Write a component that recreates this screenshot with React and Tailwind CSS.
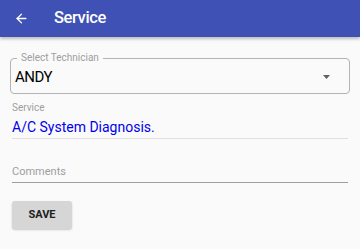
import { ArrowLeft } from "lucide-react";

function App() {
     return (
          <div className="w-[360px] h-[249px] bg-[#fafafa] overflow-hidden font-['Roboto',sans-serif]">

               {/* Header */}
               <header className="h-[37px] bg-[#3f51b5] flex items-center shadow-[0_2px_3px_rgba(0,0,0,0.25)]">
                    <ArrowLeft size={15} strokeWidth={2.2} className="ml-[14px] text-white" />
                    <h1 className="ml-[25px] text-[16.5px] tracking-[-0.4px] font-medium text-white">Service</h1>
               </header>

               <div className="px-[10px] pt-[21px]">

                    {/* Select */}
                    <div className="relative h-[36px] border border-[#b4b4b4] rounded-[4px] pl-[4px] pr-[19px] pt-[2px] flex items-center justify-between">
                         <span className="absolute left-[6px] -top-[7px] px-[4px] bg-[#fafafa] text-[10px] leading-[12px] text-[#9e9e9e]">
                              Select Technician
                         </span>
                         <span className="text-[15px] tracking-[-0.5px] text-black">ANDY</span>
                         <svg width="7" height="4" viewBox="0 0 7 4" className="-mt-[1px]">
                              <path d="M0 0 L7 0 L3.5 4 Z" fill="#616161" />
                         </svg>
                    </div>

                    {/* Service */}
                    <div className="mx-[2px] mt-[8px]">
                         <p className="text-[10px] leading-[12px] text-[#9e9e9e]">Service</p>
                         <p className="text-[14px] leading-[20px] mt-[3px] text-[#0000ee]">A/C System Diagnosis.</p>
                         <div className="h-px bg-[#e0e0e0] mt-[1px]"></div>
                    </div>

                    {/* Comments */}
                    <div className="mx-[2px] mt-[26px]">
                         <p className="text-[11px] leading-[14px] text-[#9e9e9e]">Comments</p>
                         <div className="h-px bg-[#9e9e9e] mt-[3px]"></div>
                    </div>

                    <button className="mt-[18px] ml-[2px] w-[60px] h-[28px] rounded-[3px] bg-[#d6d6d6] text-[11px] font-bold text-[#212121] shadow-[0_1px_2px_rgba(0,0,0,0.2)]">
                         SAVE
                    </button>

               </div>
          </div>
     );
}

export default App;
